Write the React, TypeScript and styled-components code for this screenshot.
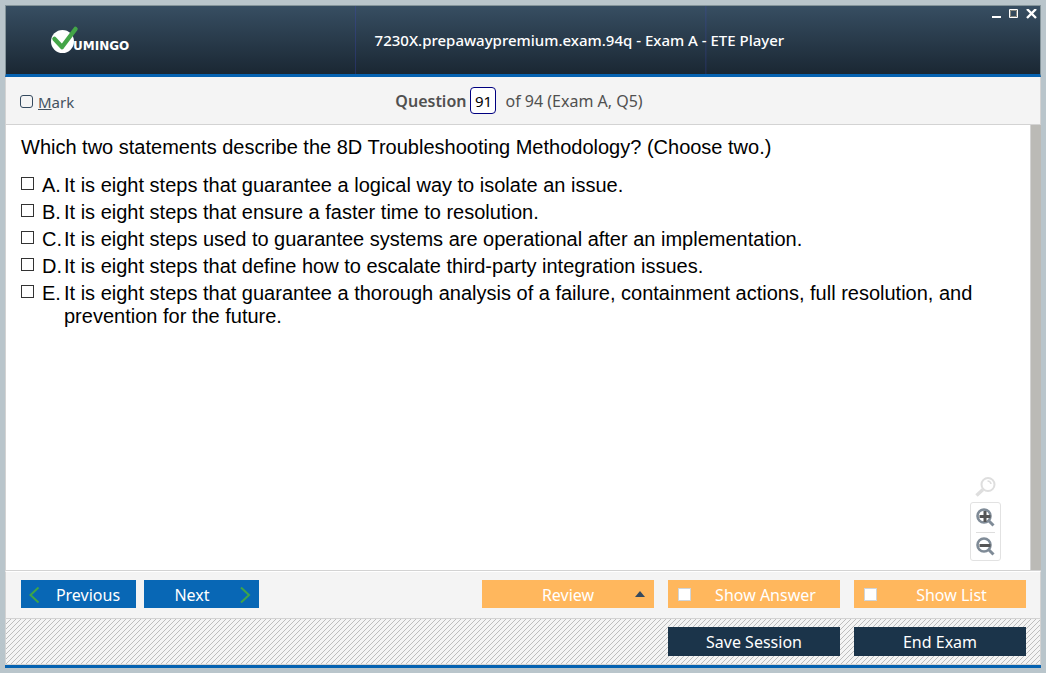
import React from "react";
import styled, { createGlobalStyle, css } from "styled-components";

const GlobalStyle = createGlobalStyle`
  *, *::before, *::after { box-sizing: border-box; }
  body { margin: 0; background: #b9c5cb; }
`;

const uiFont = `"Noto Sans", "Segoe UI", sans-serif`;

const Desktop = styled.div`
  display: flex;
  min-height: 100vh;
  padding: 5px;
  background: #b9c5cb;
  font-family: ${uiFont};
`;

const Window = styled.div`
  flex: 1;
  min-width: 0;
  display: flex;
  flex-direction: column;
  border-bottom: 3px solid #0562b1;
`;

const TitleBar = styled.header`
  display: grid;
  grid-template-columns: 35fr 64fr auto;
  height: 72px;
  border: 1px solid #84949a;
  border-bottom: 3px solid #0562b1;
  background: linear-gradient(#374e62, #1a2733);
`;

const Logo = styled.svg`
  display: block;
  align-self: center;
  margin-left: 44px;
`;

const Title = styled.h1`
  display: flex;
  align-items: center;
  margin: 0;
  padding: 0 0 0 20px;
  background: linear-gradient(to right, rgba(60, 70, 190, 0.3) 1px, transparent 1px) 0 0 / 55% 100%;
  color: #fff;
  font-size: 15px;
  font-weight: 500;
  line-height: 20px;
`;

const WindowControls = styled.div`
  display: flex;
  gap: 6px;
  align-self: start;
  padding: 3px 3px 0 0;
`;

const ControlButton = styled.button`
  display: flex;
  width: 11px;
  height: 11px;
  padding: 0;
  border: 0;
  background: none;
`;

const QuestionBar = styled.div`
  display: grid;
  grid-template-columns: 1fr auto 1fr;
  align-items: center;
  height: 48px;
  padding: 0 22px 0 14px;
  border: solid #d3d3d3;
  border-width: 0 1px 1px;
  background: #f4f4f4;
  color: #505050;
  font-size: 16px;
`;

const MarkLabel = styled.label`
  display: flex;
  align-items: center;
  gap: 5px;
  padding-top: 2px;
  color: #43525f;
  font-size: 15px;
`;

const Check = styled.input<{ $kind: "mark" | "answer" | "button" }>`
  flex: none;
  appearance: none;
  width: 13px;
  height: 13px;
  margin: 0;
  border: 1px solid #333;
  background: #fff;
  ${(p) => p.$kind === "answer" && css`
    margin-top: 3px;
  `}
  ${(p) => p.$kind === "mark" && css`
    border-color: #34495e;
    border-radius: 3px;
    background: transparent;
  `}
  ${(p) => p.$kind === "button" && css`
    border-color: #d0d4d8;
  `}
`;

const Position = styled.div`
  display: flex;
  align-items: center;
`;

const PositionLabel = styled.label`
  font-weight: 600;
`;

const NumberBox = styled.input`
  width: 26px;
  height: 27px;
  margin: 0 9px 0 4px;
  padding: 0;
  border: 1px solid #000080;
  border-radius: 4px;
  background: #fff;
  color: #000;
  font: 15px ${uiFont};
  text-align: center;
`;

const Content = styled.main`
  flex: 1;
  position: relative;
  display: flex;
  border: solid #d3d3d3;
  border-width: 0 0 1px 1px;
  background: #fff;
`;

const Question = styled.section`
  flex: 1;
  padding: 11px 40px 0 15px;
  color: #000;
  font-family: "Liberation Sans", Arial, sans-serif;
  font-size: 20px;
  line-height: 23px;
`;

const Prompt = styled.p`
  margin: 0 0 15px;
`;

const Choices = styled.div`
  display: flex;
  flex-direction: column;
  gap: 4px;
`;

const Choice = styled.label`
  display: grid;
  grid-template-columns: 21px 22px 1fr;
`;

const ChoiceLetter = styled.span`
  white-space: nowrap;
`;

const ZoomTools = styled.div`
  position: absolute;
  right: 40px;
  bottom: 9px;
  display: flex;
  flex-direction: column;
  align-items: center;
  gap: 5px;
`;

const ZoomPanel = styled.div`
  width: 31px;
  padding: 0 5px;
  border: 1px solid #e2e2e2;
  border-radius: 3px;
`;

const ZoomButton = styled.button`
  display: flex;
  align-items: center;
  justify-content: center;
  width: 100%;
  height: 29px;
  padding: 0;
  border: 0;
  background: none;
  & + & { height: 28px; border-top: 1px solid #dedede; }
`;

const ScrollTrack = styled.div`
  width: 11px;
  border-left: 1px solid #d3d3d3;
  background: #bbbab6;
`;

const Toolbar = styled.footer`
  display: flex;
  align-items: flex-start;
  height: 48px;
  gap: 14px;
  padding: 8px 14px 0 15px;
  border: 1px solid #d3d3d3;
  border-top-color: #fff;
  background: #f4f4f4;
`;

const NavGroup = styled.div`
  display: flex;
  gap: 8px;
  margin-right: auto;
`;

const buttonBase = css`
  display: flex;
  align-items: center;
  height: 28px;
  border: 0;
  color: #fff;
  font: 16px/22px ${uiFont};
`;

const NavButton = styled.button`
  ${buttonBase}
  gap: 8px;
  width: 115px;
  padding: 2px 8px 0;
  background: #0867b5;
`;

const NavText = styled.span`
  flex: 1;
  text-align: center;
`;

const ActionButton = styled.button<{ $dark?: boolean }>`
  ${buttonBase}
  position: relative;
  justify-content: center;
  width: 172px;
  height: ${(p) => (p.$dark ? 29 : 28)}px;
  padding: ${(p) => (p.$dark ? 0 : 2)}px 0 0;
  background: ${(p) => (p.$dark ? "#1b344a" : "#ffb75d")};
`;

const MenuArrow = styled.svg`
  position: absolute;
  right: 9px;
  top: 11px;
`;

const ToggleLabel = styled.label`
  ${buttonBase}
  width: 172px;
  padding: 0 10px;
  background: #ffb75d;
`;

const ToggleText = styled.span`
  flex: 1;
  padding: 2px 0 0 10px;
  text-align: center;
`;

const SessionBar = styled.footer`
  display: flex;
  justify-content: flex-end;
  align-items: flex-start;
  gap: 14px;
  height: 46px;
  padding: 8px 14px 0;
  border: solid #d3d3d3;
  border-width: 0 1px 1px;
  background: #f4f4f4 linear-gradient(to bottom right, transparent 42%, #bdbdbd 42% 58%, transparent 58%) 0 0 / 5px 5px;
`;

const choices = [
  ["A", "It is eight steps that guarantee a logical way to isolate an issue."],
  ["B", "It is eight steps that ensure a faster time to resolution."],
  ["C", "It is eight steps used to guarantee systems are operational after an implementation."],
  ["D", "It is eight steps that define how to escalate third-party integration issues."],
  ["E", "It is eight steps that guarantee a thorough analysis of a failure, containment actions, full resolution, and prevention for the future."],
];

const Chevron = ({ back }: { back?: boolean }) => (
  <svg width="11" height="16" fill="none" stroke="#3fa548" strokeWidth="2">
    <path d={back ? "M9.500 0.500L1.500 8L9.500 15.500" : "M1 0.500L9 8L1 15.500"} />
  </svg>
);

const Magnifier = ({ plus }: { plus?: boolean }) => (
  <svg width="19" height="19" fill="none">
    <circle cx="8" cy="8" r="6.500" stroke="#7f8b97" strokeWidth="2.600" />
    <path d="M12.500 12.500L17.500 17.500" stroke="#7f8b97" strokeWidth="3" />
    <path d={plus ? "M3.500 8.500H14.500M9 3V14" : "M3.500 8.500H14.500"} stroke="#555" strokeWidth="3" />
  </svg>
);

export default function App() {
  return (
    <Desktop>
      <GlobalStyle />
      <Window>
        <TitleBar>
          <Logo width="84" height="30" role="img" aria-label="Vumingo">
            <circle cx="12.500" cy="16.500" r="11.500" fill="#fff" />
            <path d="M4.500 14L12 22L25.500 4" fill="none" stroke="#43a547" strokeWidth="4.500" strokeLinecap="round" strokeLinejoin="round" />
            <text x="23" y="25" fill="#fff" fontFamily="DejaVu Sans" fontWeight="bold" fontSize="12">UMINGO</text>
          </Logo>
          <Title>7230X.prepawaypremium.exam.94q - Exam A - ETE Player</Title>
          <WindowControls>
            <ControlButton aria-label="Minimize">
              <svg width="11" height="11"><path d="M0 7h9v2H0z" fill="#fff" /></svg>
            </ControlButton>
            <ControlButton aria-label="Maximize">
              <svg width="11" height="11" fill="none"><path d="M0.500 0.500h8v8h-8z" stroke="#fff" /><path d="M1.500 1.500h6v6h-6z" stroke="#8a8a80" /></svg>
            </ControlButton>
            <ControlButton aria-label="Close">
              <svg width="11" height="11"><path d="M1 0L10 9M10 0L1 9" stroke="#fff" strokeWidth="2.400" /></svg>
            </ControlButton>
          </WindowControls>
        </TitleBar>
        <QuestionBar>
          <MarkLabel>
            <Check type="checkbox" $kind="mark" />
            <span><u>M</u>ark</span>
          </MarkLabel>
          <Position>
            <PositionLabel htmlFor="question-number">Question</PositionLabel>
            <NumberBox id="question-number" defaultValue="91" />
            <span>of 94 (Exam A, Q5)</span>
          </Position>
        </QuestionBar>
        <Content>
          <Question>
            <Prompt>Which two statements describe the 8D Troubleshooting Methodology? (Choose two.)</Prompt>
            <Choices>
              {choices.map(([letter, text]) => (
                <Choice key={letter}>
                  <Check type="checkbox" $kind="answer" />
                  <ChoiceLetter>{letter}.</ChoiceLetter>
                  <span>{text}</span>
                </Choice>
              ))}
            </Choices>
          </Question>
          <ZoomTools>
            <svg width="21" height="20" fill="none" stroke="#dedede">
              <circle cx="13" cy="7.500" r="6.500" strokeWidth="2" />
              <path d="M8 12.500L1.500 18.500" strokeWidth="3.500" />
              <path d="M12.500 4Q15.500 4 16 7" strokeWidth="1.500" />
            </svg>
            <ZoomPanel>
              <ZoomButton aria-label="Zoom in"><Magnifier plus /></ZoomButton>
              <ZoomButton aria-label="Zoom out"><Magnifier /></ZoomButton>
            </ZoomPanel>
          </ZoomTools>
          <ScrollTrack />
        </Content>
        <Toolbar>
          <NavGroup>
            <NavButton><Chevron back /><NavText>Previous</NavText></NavButton>
            <NavButton><NavText>Next</NavText><Chevron /></NavButton>
          </NavGroup>
          <ActionButton>
            Review
            <MenuArrow width="10" height="6"><path d="M0 6L5 0L10 6z" fill="#34495e" /></MenuArrow>
          </ActionButton>
          <ToggleLabel><Check type="checkbox" $kind="button" /><ToggleText>Show Answer</ToggleText></ToggleLabel>
          <ToggleLabel><Check type="checkbox" $kind="button" /><ToggleText>Show List</ToggleText></ToggleLabel>
        </Toolbar>
        <SessionBar>
          <ActionButton $dark>Save Session</ActionButton>
          <ActionButton $dark>End Exam</ActionButton>
        </SessionBar>
      </Window>
    </Desktop>
  );
}
